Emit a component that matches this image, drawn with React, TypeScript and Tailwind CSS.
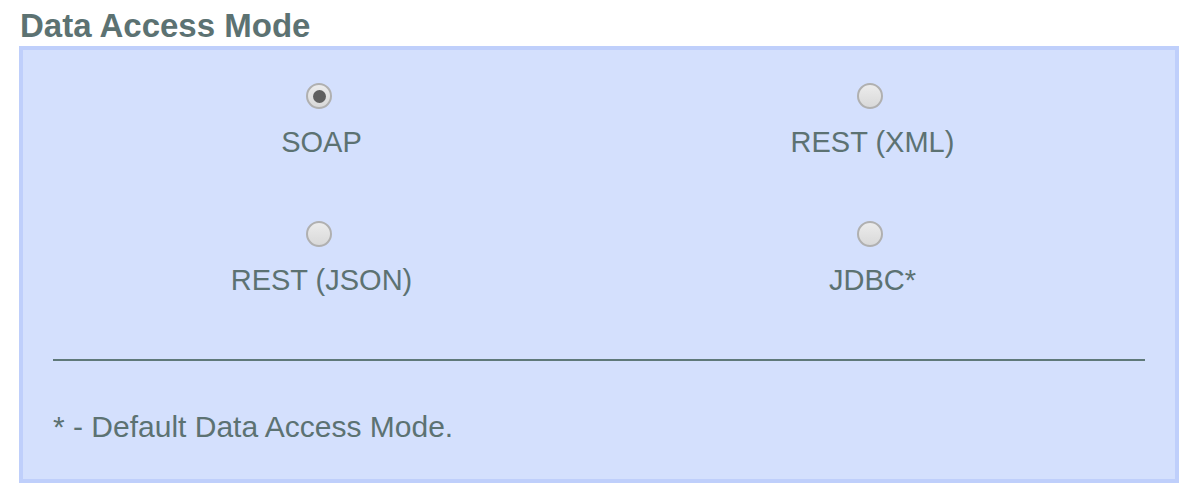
const options = [
  { label: "SOAP", checked: true },
  { label: "REST (XML)", checked: false },
  { label: "REST (JSON)", checked: false },
  { label: "JDBC*", checked: false },
];

function Radio({ checked }: { checked: boolean }) {
  return (
    <div className="mr-[5px] flex h-[26px] w-[26px] items-center justify-center rounded-full border-2 border-[#b0b0b0] bg-gradient-to-b from-[#ececec] to-[#d9d9d9]">
      {checked && <div className="h-[13px] w-[13px] rounded-full bg-[#606060]" />}
    </div>
  );
}

export default function App() {
  return (
    <div
      className="h-[488px] w-[1195px] bg-white text-[#5c7272]"
      style={{ fontFamily: '"Liberation Sans", Arial, sans-serif' }}
    >
      {/* Heading */}
      <h2 className="pl-[20px] pt-[9px] text-[33px] font-bold leading-[33px]">Data Access Mode</h2>

      {/* Panel */}
      <div className="ml-[19px] mt-[4px] h-[437px] w-[1160px] border-4 border-[#bfcffb] bg-[#d4e0fd]">
        <div className="grid grid-cols-2 gap-y-[64px] pl-[23px] pr-[27px] pt-[33px]">
          {options.map((opt) => (
            <div key={opt.label} className="flex flex-col items-center">
              <Radio checked={opt.checked} />
              <span className="mt-[19px] text-[29px] leading-[29px]">{opt.label}</span>
            </div>
          ))}
        </div>

        <div className="mx-[30px] mt-[64px] h-[2px] bg-[#5f7979]" />

        <p className="pl-[30px] pt-[51px] text-[30px] leading-[29px]">* - Default Data Access Mode.</p>
      </div>
    </div>
  );
}
